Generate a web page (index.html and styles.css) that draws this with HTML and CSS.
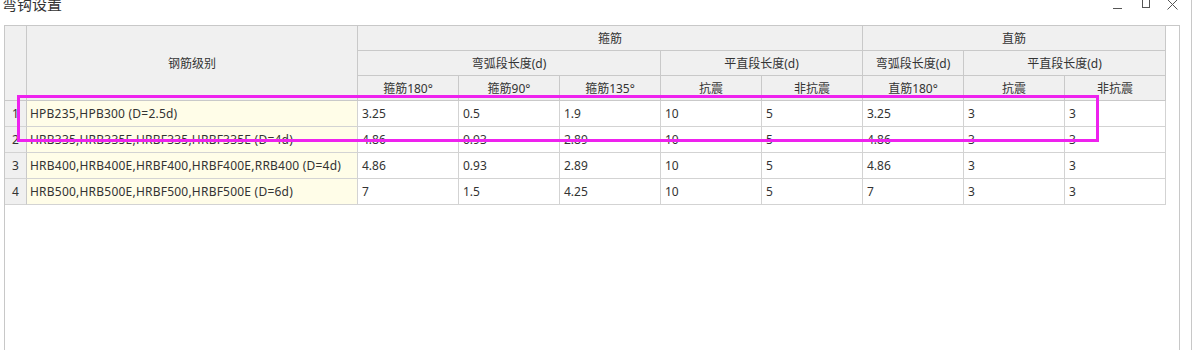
FILE: index.html
```html
<!DOCTYPE html>
<html lang="zh">
<head>
<meta charset="utf-8">
<link rel="stylesheet" href="styles.css">
</head>
<body>
<div class="window">
  <div class="titlebar">
    <span class="title">弯钩设置</span>
    <div class="controls">
      <span class="ctl ctl-min"></span>
      <span class="ctl ctl-max"></span>
      <svg class="ctl-close" width="11" height="11" viewBox="0 0 11 11"><path d="M0.5 0.5 L10.5 10.5 M10.5 0.5 L0.5 10.5" stroke="#555" stroke-width="1" fill="none"/></svg>
    </div>
  </div>
  <div class="panel">
    <div class="grid">
      <div class="c h rn span3"></div>
      <div class="c h name span3">钢筋级别</div>
      <div class="c h g5">箍筋</div>
      <div class="c h g3">直筋</div>
      <div class="c h g3">弯弧段长度(d)</div>
      <div class="c h g2">平直段长度(d)</div>
      <div class="c h">弯弧段长度(d)</div>
      <div class="c h g2">平直段长度(d)</div>
      <div class="c h">箍筋180°</div>
      <div class="c h">箍筋90°</div>
      <div class="c h">箍筋135°</div>
      <div class="c h">抗震</div>
      <div class="c h">非抗震</div>
      <div class="c h">直筋180°</div>
      <div class="c h">抗震</div>
      <div class="c h">非抗震</div>

      <div class="c rn">1</div>
      <div class="c nm">HPB235,HPB300 (D=2.5d)</div>
      <div class="c d">3.25</div><div class="c d">0.5</div><div class="c d">1.9</div><div class="c d">10</div><div class="c d">5</div><div class="c d">3.25</div><div class="c d">3</div><div class="c d">3</div>

      <div class="c rn">2</div>
      <div class="c nm">HRB335,HRB335E,HRBF335,HRBF335E (D=4d)</div>
      <div class="c d">4.86</div><div class="c d">0.93</div><div class="c d">2.89</div><div class="c d">10</div><div class="c d">5</div><div class="c d">4.86</div><div class="c d">3</div><div class="c d">3</div>

      <div class="c rn">3</div>
      <div class="c nm">HRB400,HRB400E,HRBF400,HRBF400E,RRB400 (D=4d)</div>
      <div class="c d">4.86</div><div class="c d">0.93</div><div class="c d">2.89</div><div class="c d">10</div><div class="c d">5</div><div class="c d">4.86</div><div class="c d">3</div><div class="c d">3</div>

      <div class="c rn">4</div>
      <div class="c nm">HRB500,HRB500E,HRBF500,HRBF500E (D=6d)</div>
      <div class="c d">7</div><div class="c d">1.5</div><div class="c d">4.25</div><div class="c d">10</div><div class="c d">5</div><div class="c d">7</div><div class="c d">3</div><div class="c d">3</div>
    </div>
  </div>
  <div class="highlight"></div>
</div>
</body>
</html>
```

FILE: styles.css
```css
html, body {
  margin: 0;
  padding: 0;
  background: #fff;
  overflow: hidden;
}
body {
  width: 1192px;
  height: 350px;
  font-family: "Noto Sans", "Noto Sans CJK SC", sans-serif;
  color: #333;
}
.window {
  position: relative;
  width: 1192px;
  height: 350px;
  box-sizing: border-box;
  border-right: 1px solid #c8c8c8;
}
.titlebar {
  height: 25px;
  display: flex;
  align-items: flex-start;
  justify-content: space-between;
}
.title {
  font-family: "Noto Sans CJK SC", sans-serif;
  font-size: 15px;
  line-height: 15px;
  margin-top: -4px;
  margin-left: 2px;
  color: #333;
}
.controls {
  display: flex;
  align-items: flex-start;
  margin-right: 13px;
}
.ctl-min {
  width: 9px;
  height: 1px;
  background: #555;
  margin-top: 8px;
  margin-right: 20px;
}
.ctl-max {
  width: 8px;
  height: 8px;
  box-sizing: border-box;
  border: 1px solid #555;
  border-top: none;
  margin-right: 17px;
}
.ctl-close {
  display: block;
  margin-top: -1px;
}
.panel {
  margin-left: 4px;
  width: 1176px;
  height: 340px;
  box-sizing: border-box;
  border: 1px solid #c8c8c8;
  border-bottom: none;
}
.grid {
  display: grid;
  grid-template-columns: 22px 331px repeat(8, 101px);
  grid-template-rows: 25px 25px 25px repeat(4, 26px);
  font-size: 12px;
}
.c {
  box-sizing: border-box;
  border-right: 1px solid #d3d3d3;
  border-bottom: 1px solid #d3d3d3;
  display: flex;
  align-items: center;
  white-space: nowrap;
  overflow: hidden;
}
.h {
  background: #f0f0f0;
  justify-content: center;
  border-color: #c9c9c9;
  color: #333;
}
.span3 { grid-row: span 3; }
.g5 { grid-column: span 5; }
.g3 { grid-column: span 3; }
.g2 { grid-column: span 2; }
.rn {
  background: #f0f0f0;
  justify-content: center;
  border-right-color: #c9c9c9;
}
.nm {
  background: #fffde8;
  padding-left: 3px;
  letter-spacing: 0.22px;
}
.d {
  padding-left: 4px;
}
.highlight {
  position: absolute;
  left: 17px;
  top: 95px;
  width: 1082px;
  height: 47px;
  box-sizing: border-box;
  border: 3px solid #ee22ee;
}
```
